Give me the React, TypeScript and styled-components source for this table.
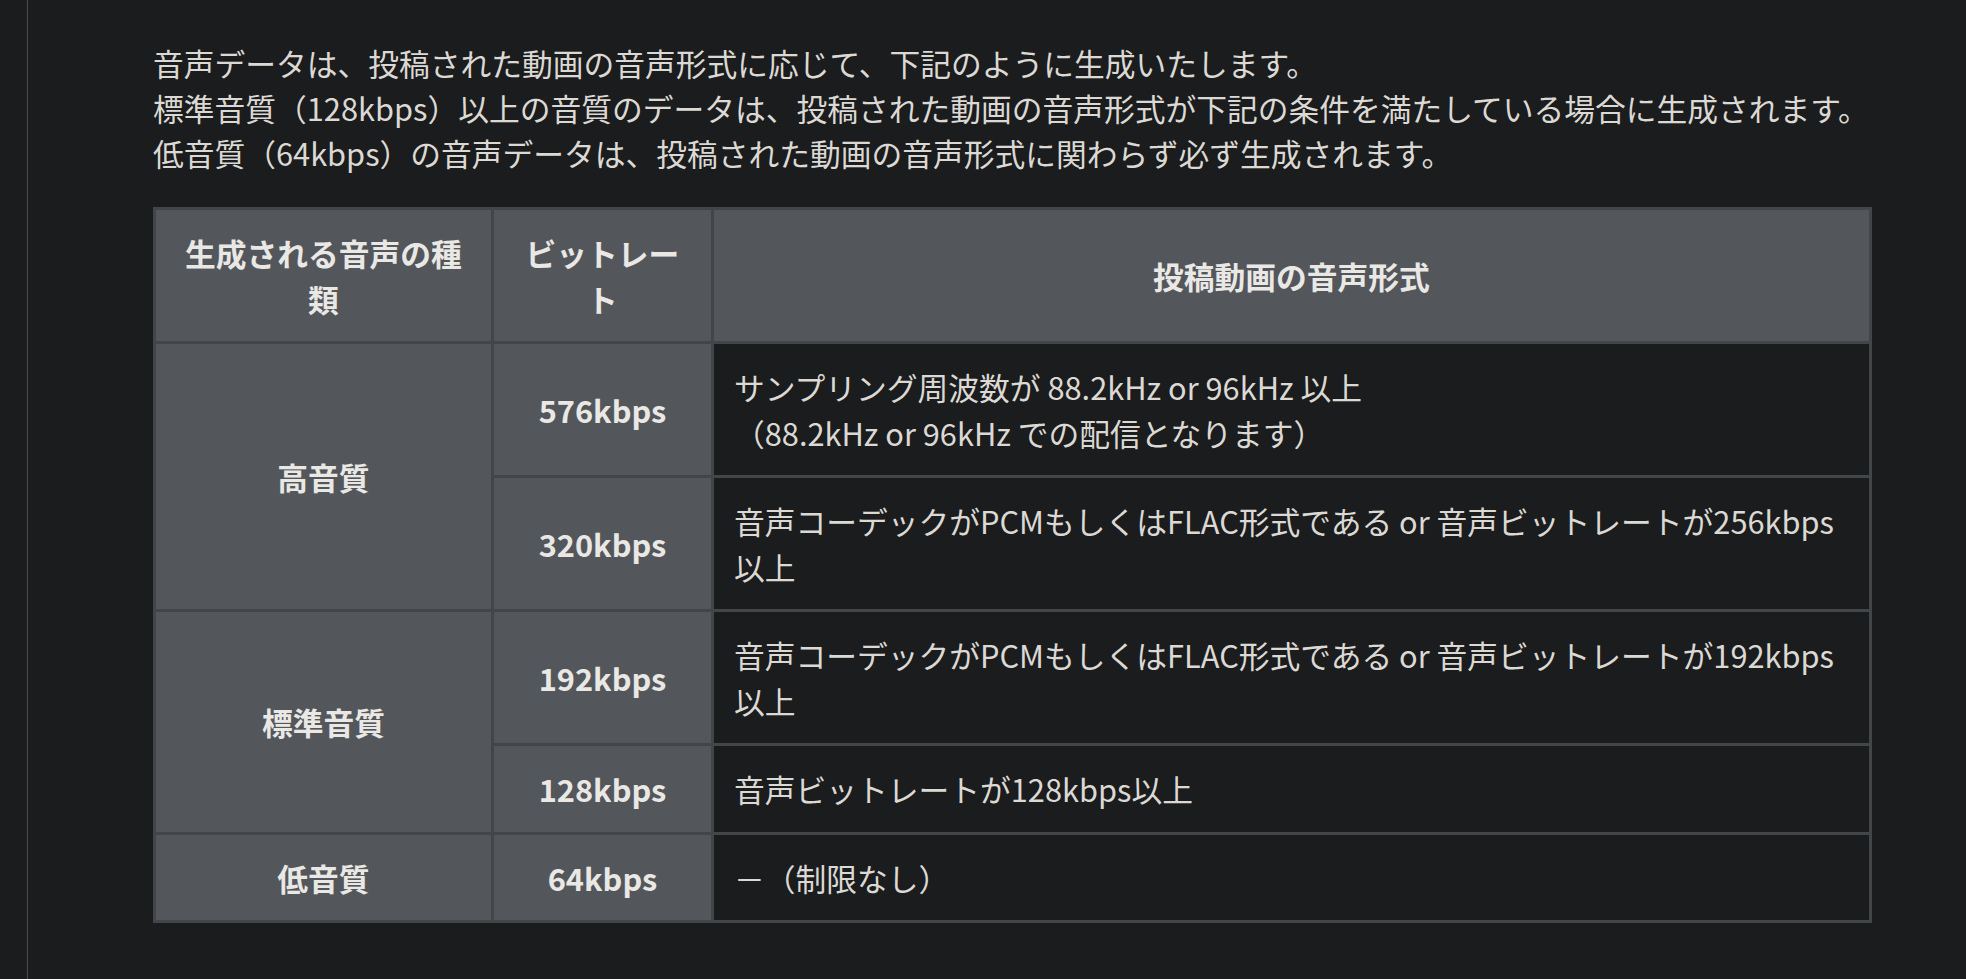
import React from "react";
import styled, { createGlobalStyle } from "styled-components";

const GlobalStyle = createGlobalStyle`
  html, body {
    margin: 0;
    padding: 0;
    background: #1b1c1e;
  }
  body {
    font-family: "Noto Sans CJK JP", "Noto Sans", sans-serif;
    color: #dcd9d4;
  }
`;

const Page = styled.div`
  display: flex;
  min-height: 100vh;
  background: #1b1c1e;
`;

const SideRule = styled.div`
  flex: 0 0 27px;
  border-right: 1px solid #4a4d50;
`;

const Content = styled.main`
  flex: 0 0 auto;
  width: 1719px;
  padding: 40px 0 0 125px;
`;

const Intro = styled.p`
  margin: 0 0 32px;
  font-size: 30.75px;
  line-height: 45px;
  color: #dcd9d4;
  white-space: nowrap;
`;

const Table = styled.table`
  width: 1719px;
  table-layout: fixed;
  border-collapse: separate;
  border-spacing: 3px;
  background: #424649;
  font-size: 30.75px;
  line-height: 45.5px;
`;

const Col = styled.col<{ $w?: number }>`
  width: ${(p) => (p.$w ? `${p.$w}px` : "auto")};
`;

const HeadCell = styled.th`
  padding: 20px;
  background: #53575b;
  color: #eae8e5;
  font-weight: 700;
  text-align: center;
  vertical-align: middle;
`;

const BodyCell = styled.td`
  padding: 20px;
  background: #1b1c1e;
  color: #dcd9d4;
  font-weight: 400;
  text-align: left;
  vertical-align: middle;
`;

export default function App() {
  return (
    <>
      <GlobalStyle />
      <Page>
        <SideRule />
        <Content>
          <Intro>
            音声データは、投稿された動画の音声形式に応じて、下記のように生成いたします。
            <br />
            標準音質（128kbps）以上の音質のデータは、投稿された動画の音声形式が下記の条件を満たしている場合に生成されます。
            <br />
            低音質（64kbps）の音声データは、投稿された動画の音声形式に関わらず必ず生成されます。
          </Intro>
          <Table>
            <colgroup>
              <Col $w={335} />
              <Col $w={217} />
              <Col />
            </colgroup>
            <thead>
              <tr>
                <HeadCell>生成される音声の種類</HeadCell>
                <HeadCell>ビットレート</HeadCell>
                <HeadCell>投稿動画の音声形式</HeadCell>
              </tr>
            </thead>
            <tbody>
              <tr>
                <HeadCell rowSpan={2}>高音質</HeadCell>
                <HeadCell>576kbps</HeadCell>
                <BodyCell>
                  サンプリング周波数が 88.2kHz or 96kHz 以上
                  <br />
                  （88.2kHz or 96kHz での配信となります）
                </BodyCell>
              </tr>
              <tr>
                <HeadCell>320kbps</HeadCell>
                <BodyCell>
                  音声コーデックがPCMもしくはFLAC形式である or 音声ビットレートが256kbps以上
                </BodyCell>
              </tr>
              <tr>
                <HeadCell rowSpan={2}>標準音質</HeadCell>
                <HeadCell>192kbps</HeadCell>
                <BodyCell>
                  音声コーデックがPCMもしくはFLAC形式である or 音声ビットレートが192kbps以上
                </BodyCell>
              </tr>
              <tr>
                <HeadCell>128kbps</HeadCell>
                <BodyCell>音声ビットレートが128kbps以上</BodyCell>
              </tr>
              <tr>
                <HeadCell>低音質</HeadCell>
                <HeadCell>64kbps</HeadCell>
                <BodyCell>－（制限なし）</BodyCell>
              </tr>
            </tbody>
          </Table>
        </Content>
      </Page>
    </>
  );
}
